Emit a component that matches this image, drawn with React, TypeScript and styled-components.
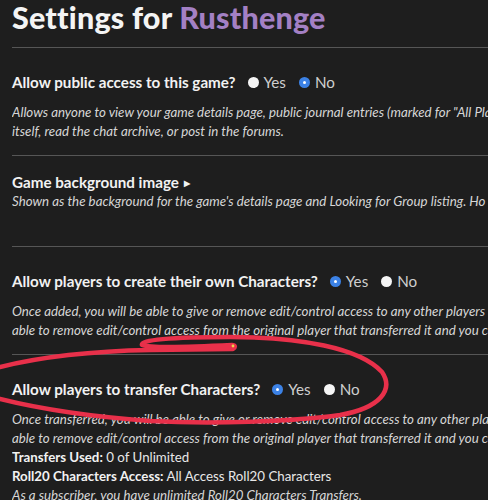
import React from 'react';
import styled, { createGlobalStyle } from 'styled-components';

const GlobalStyle = createGlobalStyle`
  html, body {
    margin: 0;
    padding: 0;
    background: #1e1e1e;
    overflow: hidden;
  }
`;

const Page = styled.div`
  position: relative;
  width: 464px;
  padding: 0 12px;
  font-family: Lato, 'Open Sans', sans-serif;
  color: #f2f2f2;
  background: #1e1e1e;
  min-height: 500px;
  overflow: hidden;
`;

const Title = styled.h1`
  margin: 0;
  padding: 0 0 13px;
  font-size: 30.5px;
  line-height: 34px;
  font-weight: 900;
  letter-spacing: 0.2px;
  color: #f4f4f4;
  white-space: nowrap;

  span {
    color: #a380c4;
  }
`;

const Section = styled.section<{ $top?: number; $bottom?: number }>`
  border-top: 1px solid #565656;
  margin-right: -12px;
  padding: ${p => p.$top ?? 24}px 0 ${p => p.$bottom ?? 14}px;
`;

const Question = styled.div`
  display: flex;
  align-items: center;
  height: 20px;
  font-size: 15.2px;
  font-weight: 700;
  white-space: nowrap;
`;

const Label = styled.span`
  margin-right: 12px;
`;

const Option = styled.span`
  display: inline-flex;
  align-items: center;
  gap: 5px;
  margin-right: 13px;
  font-weight: 400;
  color: #cfcfcf;
`;

const Radio = styled.span<{ $checked?: boolean }>`
  width: 11px;
  height: 11px;
  border-radius: 50%;
  box-sizing: border-box;
  background: ${p => (p.$checked ? '#3c82e6' : '#f5f5f5')};
  display: inline-flex;
  align-items: center;
  justify-content: center;

  &::after {
    content: '';
    width: 3px;
    height: 3px;
    border-radius: 50%;
    background: ${p => (p.$checked ? '#fff' : 'transparent')};
  }
`;

const Heading = styled.div`
  height: 20px;
  line-height: 20px;
  font-size: 15.2px;
  font-weight: 700;
  white-space: nowrap;

  small {
    font-size: 8px;
    margin-left: 5px;
    vertical-align: 2px;
  }
`;

const Desc = styled.div<{ $gap?: number }>`
  margin-top: ${p => p.$gap ?? 11}px;
  overflow: hidden;
`;

const Line = styled.div<{ $plain?: boolean }>`
  font-size: 13.3px;
  line-height: 19px;
  white-space: nowrap;
  overflow: hidden;
  font-style: ${p => (p.$plain ? 'normal' : 'italic')};
  color: ${p => (p.$plain ? '#e8e8e8' : '#d6d6d6')};

  b {
    font-weight: 700;
    color: #f2f2f2;
  }
`;

const Scribble = styled.svg`
  position: absolute;
  left: 0;
  top: 0;
  pointer-events: none;
`;

type RadioQuestionProps = { label: string; value: 'yes' | 'no' };

const RadioQuestion = ({ label, value }: RadioQuestionProps) => (
  <Question>
    <Label>{label}</Label>
    <Option>
      <Radio $checked={value === 'yes'} />
      Yes
    </Option>
    <Option>
      <Radio $checked={value === 'no'} />
      No
    </Option>
  </Question>
);

export default function App() {
  return (
    <>
      <GlobalStyle />
      <Page>
        <Title>
          Settings for <span>Rusthenge</span>
        </Title>

        <Section>
          <RadioQuestion label="Allow public access to this game?" value="no" />
          <Desc>
            <Line>Allows anyone to view your game details page, public journal entries (marked for "All Pla</Line>
            <Line>itself, read the chat archive, or post in the forums.</Line>
          </Desc>
        </Section>

        <Section $top={16} $bottom={35}>
          <Heading>
            Game background image<small>▶</small>
          </Heading>
          <Desc $gap={0}>
            <Line>Shown as the background for the game's details page and Looking for Group listing. Ho</Line>
          </Desc>
        </Section>

        <Section>
          <RadioQuestion label="Allow players to create their own Characters?" value="yes" />
          <Desc>
            <Line>Once added, you will be able to give or remove edit/control access to any other players</Line>
            <Line>able to remove edit/control access from the original player that transferred it and you ca</Line>
          </Desc>
        </Section>

        <Section>
          <RadioQuestion label="Allow players to transfer Characters?" value="yes" />
          <Desc>
            <Line>Once transferred, you will be able to give or remove edit/control access to any other pla</Line>
            <Line>able to remove edit/control access from the original player that transferred it and you ca</Line>
            <Line $plain>
              <b>Transfers Used:</b> 0 of Unlimited
            </Line>
            <Line $plain>
              <b>Roll20 Characters Access:</b> All Access Roll20 Characters
            </Line>
            <Line>As a subscriber, you have unlimited Roll20 Characters Transfers.</Line>
          </Desc>
        </Section>

        <Scribble width="488" height="500" viewBox="0 0 488 500">
          <path
            d="M0 367 C40 357 95 351 150 350 L233 349 C236 347 235 345 232 345 C190 347 150 348 142 345 C140 340 170 337 230 337 C300 337 360 348 382 372 C394 390 380 408 340 415 C290 422 210 424 150 421 C95 417 40 409 0 399"
            fill="none"
            stroke="#e8304a"
            strokeWidth="4.5"
            strokeLinecap="round"
            strokeLinejoin="round"
          />
          <circle cx="233" cy="346" r="1.4" fill="#e8d84a" />
        </Scribble>
      </Page>
    </>
  );
}
